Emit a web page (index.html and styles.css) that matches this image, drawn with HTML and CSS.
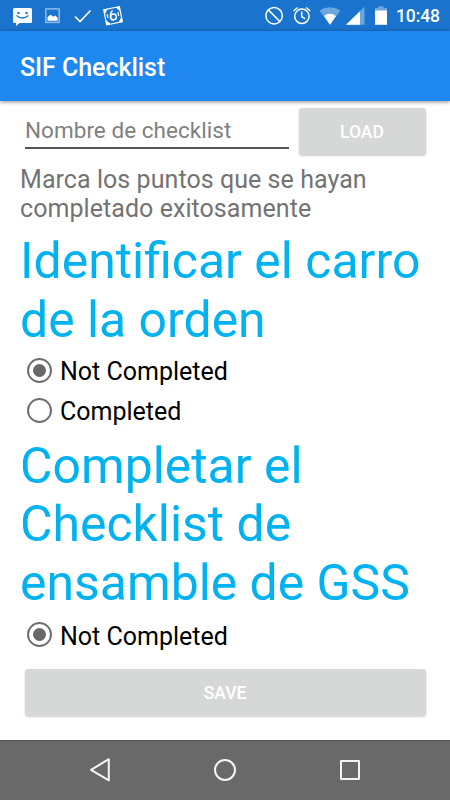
FILE: index.html
```
<!DOCTYPE html>
<html lang="es">
<head>
<meta charset="utf-8">
<title>SIF Checklist</title>
<link rel="stylesheet" href="styles.css">
</head>
<body>
<div class="screen">
  <div class="status">
    <svg class="status-icons" width="130" height="31" viewBox="0 0 130 31" fill="none">
      <path fill="#fff" d="M14.5 8h16a1.5 1.5 0 0 1 1.500 1.500v12a1.500 1.500 0 0 1-1.500 1.500H19.500L16 26v-3h-1.500a1.500 1.500 0 0 1-1.500-1.500v-12A1.500 1.500 0 0 1 14.500 8z"/>
      <g fill="#1a73cc"><circle cx="18.500" cy="13" r="1.200"/><circle cx="26.500" cy="13" r="1.200"/></g>
      <path stroke="#1a73cc" stroke-width="1.300" d="M16.500 15.500Q22.500 20.500 28.500 15.500"/>
      <rect x="45.800" y="8.900" width="13.400" height="13.500" stroke="#8ebae6" stroke-width="1.500"/>
      <path fill="#fff" d="M47.500 20.800V17l3-2.300 3 2 1.800-1.200 2.400 2.300v3z"/>
      <path stroke="#fff" stroke-width="1.600" d="M75 16.500l5 5L90.500 10.500"/>
      <g transform="rotate(-11 113 15.500)">
        <rect x="105" y="8" width="16" height="15.500" stroke="#fff" stroke-width="1.200"/>
        <path fill="#fff" d="M105 8h4l-4 5zM121 8v5l-4-5zM105 23.500v-5l4 5zM121 23.500h-4l4-5z"/>
        <path stroke="#fff" stroke-width="1.500" d="M113.500 10.500Q110.300 12.500 110.300 17"/>
        <circle cx="113.200" cy="17" r="2.900" stroke="#fff" stroke-width="1.500"/>
        <path stroke="#fff" stroke-width="1.200" d="M107.500 13v4M118.500 13v4"/>
      </g>
    </svg>
    <svg class="status-icons" width="125" height="31" viewBox="262 0 125 31" fill="none">
      <g stroke="#fff" stroke-width="1.500">
        <circle cx="274.100" cy="15.700" r="8.200"/><path d="M268.300 9.900l11.600 11.600"/>
        <circle cx="301.900" cy="16.300" r="7.200"/><path d="M301.700 11.500v5.200l3.500 2.200M293.500 11l4.200-3.500M310.300 11l-4.200-3.500"/>
      </g>
      <path fill="#6ca6df" d="M319.500 10.500Q330 4 340.500 10.500L330 24.700z"/>
      <path fill="#fff" d="M324 16Q330 11.500 336 16L330 24.700z"/>
      <path fill="#6ca6df" d="M364.500 6.800v18h-18.500z"/>
      <path fill="#fff" d="M360 11.200v13.600h-14z"/>
      <path fill="#6ca6df" d="M375 8h3.500V6.200h5V8h3.500v3h-12z"/>
      <path fill="#fff" d="M375 10.500h12v14.300h-12z"/>
    </svg>
    <span class="clock">10:48</span>
  </div>
  <header class="appbar">SIF Checklist</header>
  <main class="content">
    <div class="load-row">
      <div class="field">Nombre de checklist</div>
      <div class="button">LOAD</div>
    </div>
    <p class="hint">Marca los puntos que se hayan<br>completado exitosamente</p>
    <h1 class="task">Identificar el carro<br>de la orden</h1>
    <div class="options">
      <div class="option"><span class="radio checked"></span><span class="label">Not Completed</span></div>
      <div class="option"><span class="radio"></span><span class="label">Completed</span></div>
    </div>
    <h1 class="task">Completar el<br>Checklist de<br>ensamble de GSS</h1>
    <div class="options last">
      <div class="option"><span class="radio checked"></span><span class="label">Not Completed</span></div>
    </div>
    <div class="button save">SAVE</div>
  </main>
  <nav class="navbar">
    <svg width="450" height="60" viewBox="0 0 450 60" fill="none" stroke="#f5f5f5" stroke-width="2" stroke-linejoin="round">
      <path d="M91 29.800L108.800 19.200V40.400z"/>
      <circle cx="225" cy="30" r="10"/>
      <rect x="341" y="21" width="18" height="18"/>
    </svg>
  </nav>
</div>
</body>
</html>
```
FILE: styles.css
```
* { box-sizing: border-box; }
body { margin: 0; background: #fff; font-family: Roboto, sans-serif; }
.screen { width: 450px; height: 800px; display: flex; flex-direction: column; overflow: hidden; }
.status { height: 31px; flex: none; background: #1a73cc; display: flex; align-items: center; }
.status-icons { display: block; }
.status-icons + .status-icons { margin-left: 132px; }
.clock { margin-left: 9px; color: #fff; font-size: 17.5px; font-weight: 500; line-height: 31px; padding-top: 2px; letter-spacing: -.1px; }
.appbar { height: 70px; flex: none; background: #1e87f0; color: #fff; font-size: 25px; font-weight: 500; line-height: 74px; padding-left: 20px; letter-spacing: -.05px; box-shadow: 0 1px 4px rgba(0,0,0,.45); }
.content { flex: 1; padding: 7px 20px 0; }
.load-row { display: flex; gap: 10px; padding: 0 5px; height: 57px; }
.field { width: 263.5px; height: 41px; border-bottom: 2px solid #555; color: #808080; font-size: 22.5px; line-height: 45px; letter-spacing: .04px; }
.button { width: 127px; height: 47px; border-radius: 3px; background: #d6d8d7; color: #fff; font-size: 17.5px; font-weight: 500; line-height: 48px; text-align: center; box-shadow: 0 1px 2px rgba(0,0,0,.2); }
.field + .button { margin-right: -1px; }
.hint { margin: 0; height: 67px; color: #737373; font-size: 25px; line-height: 29.3px; letter-spacing: .06px; }
.task { margin: 0; color: #00b2f0; font-size: 49.9px; font-weight: 400; line-height: 58.8px; }
.options { padding: .5px 0 6.5px 7px; }
.options.last { padding-top: 2px; }
.option { height: 40px; display: flex; align-items: center; gap: 8px; color: #000; font-size: 25px; }
.label { padding-top: 3px; }
.radio { width: 25px; height: 25px; border: 2.5px solid #707070; border-radius: 50%; display: flex; align-items: center; justify-content: center; }
.checked::before { content: ""; display: block; width: 13px; height: 13px; border-radius: 50%; background: #686868; }
.save { width: 401px; margin-left: 4.5px; margin-top: 7.5px; }
.navbar { height: 60px; flex: none; background: #696969; border-top: 1px solid #555; }
.navbar svg { display: block; margin-top: -1px; }
```
